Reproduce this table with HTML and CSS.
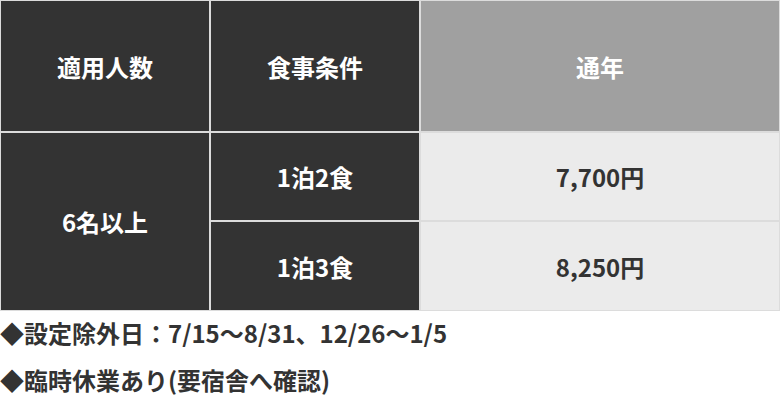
FILE: index.html
```html
<!DOCTYPE html>
<html lang="ja">
<head>
<meta charset="utf-8">
<title>料金表</title>
<link rel="stylesheet" href="styles.css">
</head>
<body>
<div class="price-table" role="table">
  <div class="cell head" role="columnheader">適用人数</div>
  <div class="cell head" role="columnheader">食事条件</div>
  <div class="cell head-season" role="columnheader">通年</div>
  <div class="cell dark span2" role="cell">6名以上</div>
  <div class="cell dark" role="cell">1泊2食</div>
  <div class="cell light" role="cell">7,700円</div>
  <div class="cell dark" role="cell">1泊3食</div>
  <div class="cell light" role="cell">8,250円</div>
</div>
<div class="notes">
  <p>◆設定除外日：7/15〜8/31、12/26〜1/5</p>
  <p>◆臨時休業あり(要宿舎へ確認)</p>
</div>
</body>
</html>
```

FILE: styles.css
```css
html, body {
  margin: 0;
  padding: 0;
  background: #ffffff;
}

body {
  width: 780px;
  font-family: "Noto Sans CJK JP", "Noto Sans", sans-serif;
  font-weight: 700;
  color: #333333;
}

.price-table {
  display: grid;
  grid-template-columns: 208px 208px 358px;
  grid-template-rows: 130px 87px 88px;
  gap: 2px;
  padding: 1px;
  background: #dcdcdc;
}

.cell {
  display: flex;
  align-items: center;
  justify-content: center;
  font-size: 24px;
}

.head,
.dark {
  background: #333333;
  color: #ffffff;
}

.head-season {
  background: #a0a0a0;
  color: #ffffff;
}

.light {
  background: #ebebeb;
  color: #333333;
}

.span2 {
  grid-row: span 2;
}

.notes {
  display: flex;
  flex-direction: column;
  gap: 14px;
  padding-top: 5px;
}

.notes p {
  margin: 0;
  font-size: 24px;
  line-height: 33px;
  color: #333333;
}
```
